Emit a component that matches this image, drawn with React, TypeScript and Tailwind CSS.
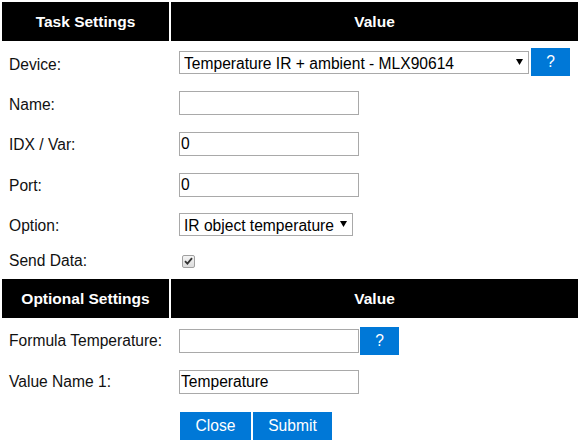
import React from 'react';

const font = { fontFamily: '"Liberation Sans", Arial, sans-serif' };

function Select({ value, width }: { value: string; width: string }) {
  return (
    <div className={`relative ${width} h-[23px]`}>
      <select
        defaultValue={value}
        className="w-full h-full appearance-none bg-white border border-[#a9a9a9] pl-[4px] pr-[12px] text-[15.6px] text-black outline-none"
      >
        <option>{value}</option>
      </select>
      <svg
        className="absolute right-[6px] top-[8px] pointer-events-none"
        width="7"
        height="6"
        viewBox="0 0 7 6"
      >
        <path d="M0 0h7L3.5 6z" fill="#000" />
      </svg>
    </div>
  );
}

function TextInput({ value = '' }: { value?: string }) {
  return (
    <input
      type="text"
      defaultValue={value}
      className="w-[180px] h-[24px] bg-white border border-[#a9a9a9] px-[1px] text-[15.6px] text-black outline-none"
    />
  );
}

function BlueButton({ label, width }: { label: string; width: string }) {
  return (
    <button
      type="button"
      className={`${width} h-[28px] bg-[#0078d7] text-white text-[15.6px] flex items-center justify-center`}
    >
      {label}
    </button>
  );
}

function Header({ title }: { title: string }) {
  return (
    <tr>
      <th className="h-[39px] bg-black text-white font-bold text-[15.5px] text-center p-0">{title}</th>
      <th className="h-[39px] bg-black text-white font-bold text-[15.5px] text-center p-0">Value</th>
    </tr>
  );
}

function Row({
  label,
  height,
  shift,
  children,
}: {
  label: string;
  height: string;
  shift: string;
  children: React.ReactNode;
}) {
  return (
    <tr>
      <td className={`${height} ${shift} pl-[7px] pr-0 pb-0 align-middle text-[15.6px] text-[#111]`}>{label}</td>
      <td className={`${height} pl-[8px] p-0 align-middle`}>
        <div className="flex items-center">{children}</div>
      </td>
    </tr>
  );
}

export default function App() {
  return (
    <div className="bg-white min-h-screen text-black" style={font}>
      <table className="border-separate border-spacing-[2px] w-[580px] table-fixed">
        <colgroup>
          <col className="w-[167px]" />
          <col className="w-[407px]" />
        </colgroup>
        <tbody>
          <Header title="Task Settings" />
          <Row label="Device:" height="h-[38px]" shift="pt-[6px]">
            <Select value="Temperature IR + ambient - MLX90614" width="w-[350px]" />
            <div className="ml-[2px]">
              <BlueButton label="?" width="w-[39px]" />
            </div>
          </Row>
          <Row label="Name:" height="h-[39px]" shift="pt-[5px]">
            <TextInput />
          </Row>
          <Row label="IDX / Var:" height="h-[39px]" shift="pt-[3px]">
            <TextInput value="0" />
          </Row>
          <Row label="Port:" height="h-[39px]" shift="pt-[3px]">
            <TextInput value="0" />
          </Row>
          <Row label="Option:" height="h-[37px]" shift="pt-[3px]">
            <Select value="IR object temperature" width="w-[174px]" />
          </Row>
          <Row label="Send Data:" height="h-[32px]" shift="pt-0">
            <div className="ml-[3px] w-[13px] h-[13px] border border-[#a0a0a0] rounded-[2px] bg-gradient-to-b from-[#f4f4f4] to-[#dcdcdc] flex items-center justify-center">
              <svg width="9" height="8" viewBox="0 0 9 8">
                <path d="M1 4.2L3.4 6.6L8 1.2" stroke="#333" strokeWidth="1.8" fill="none" />
              </svg>
            </div>
          </Row>
          <Header title="Optional Settings" />
          <Row label="Formula Temperature:" height="h-[42px]" shift="pt-0">
            <TextInput />
            <div className="ml-[1px]">
              <BlueButton label="?" width="w-[39px]" />
            </div>
          </Row>
          <Row label="Value Name 1:" height="h-[36px]" shift="pt-0">
            <TextInput value="Temperature" />
          </Row>
          <tr>
            <td className="p-0"></td>
            <td className="pl-[9px] pt-[10px] pb-[4px] pr-0 align-top">
              <div className="flex gap-[2px]">
                <BlueButton label="Close" width="w-[71px]" />
                <BlueButton label="Submit" width="w-[79px]" />
              </div>
            </td>
          </tr>
        </tbody>
      </table>
    </div>
  );
}
